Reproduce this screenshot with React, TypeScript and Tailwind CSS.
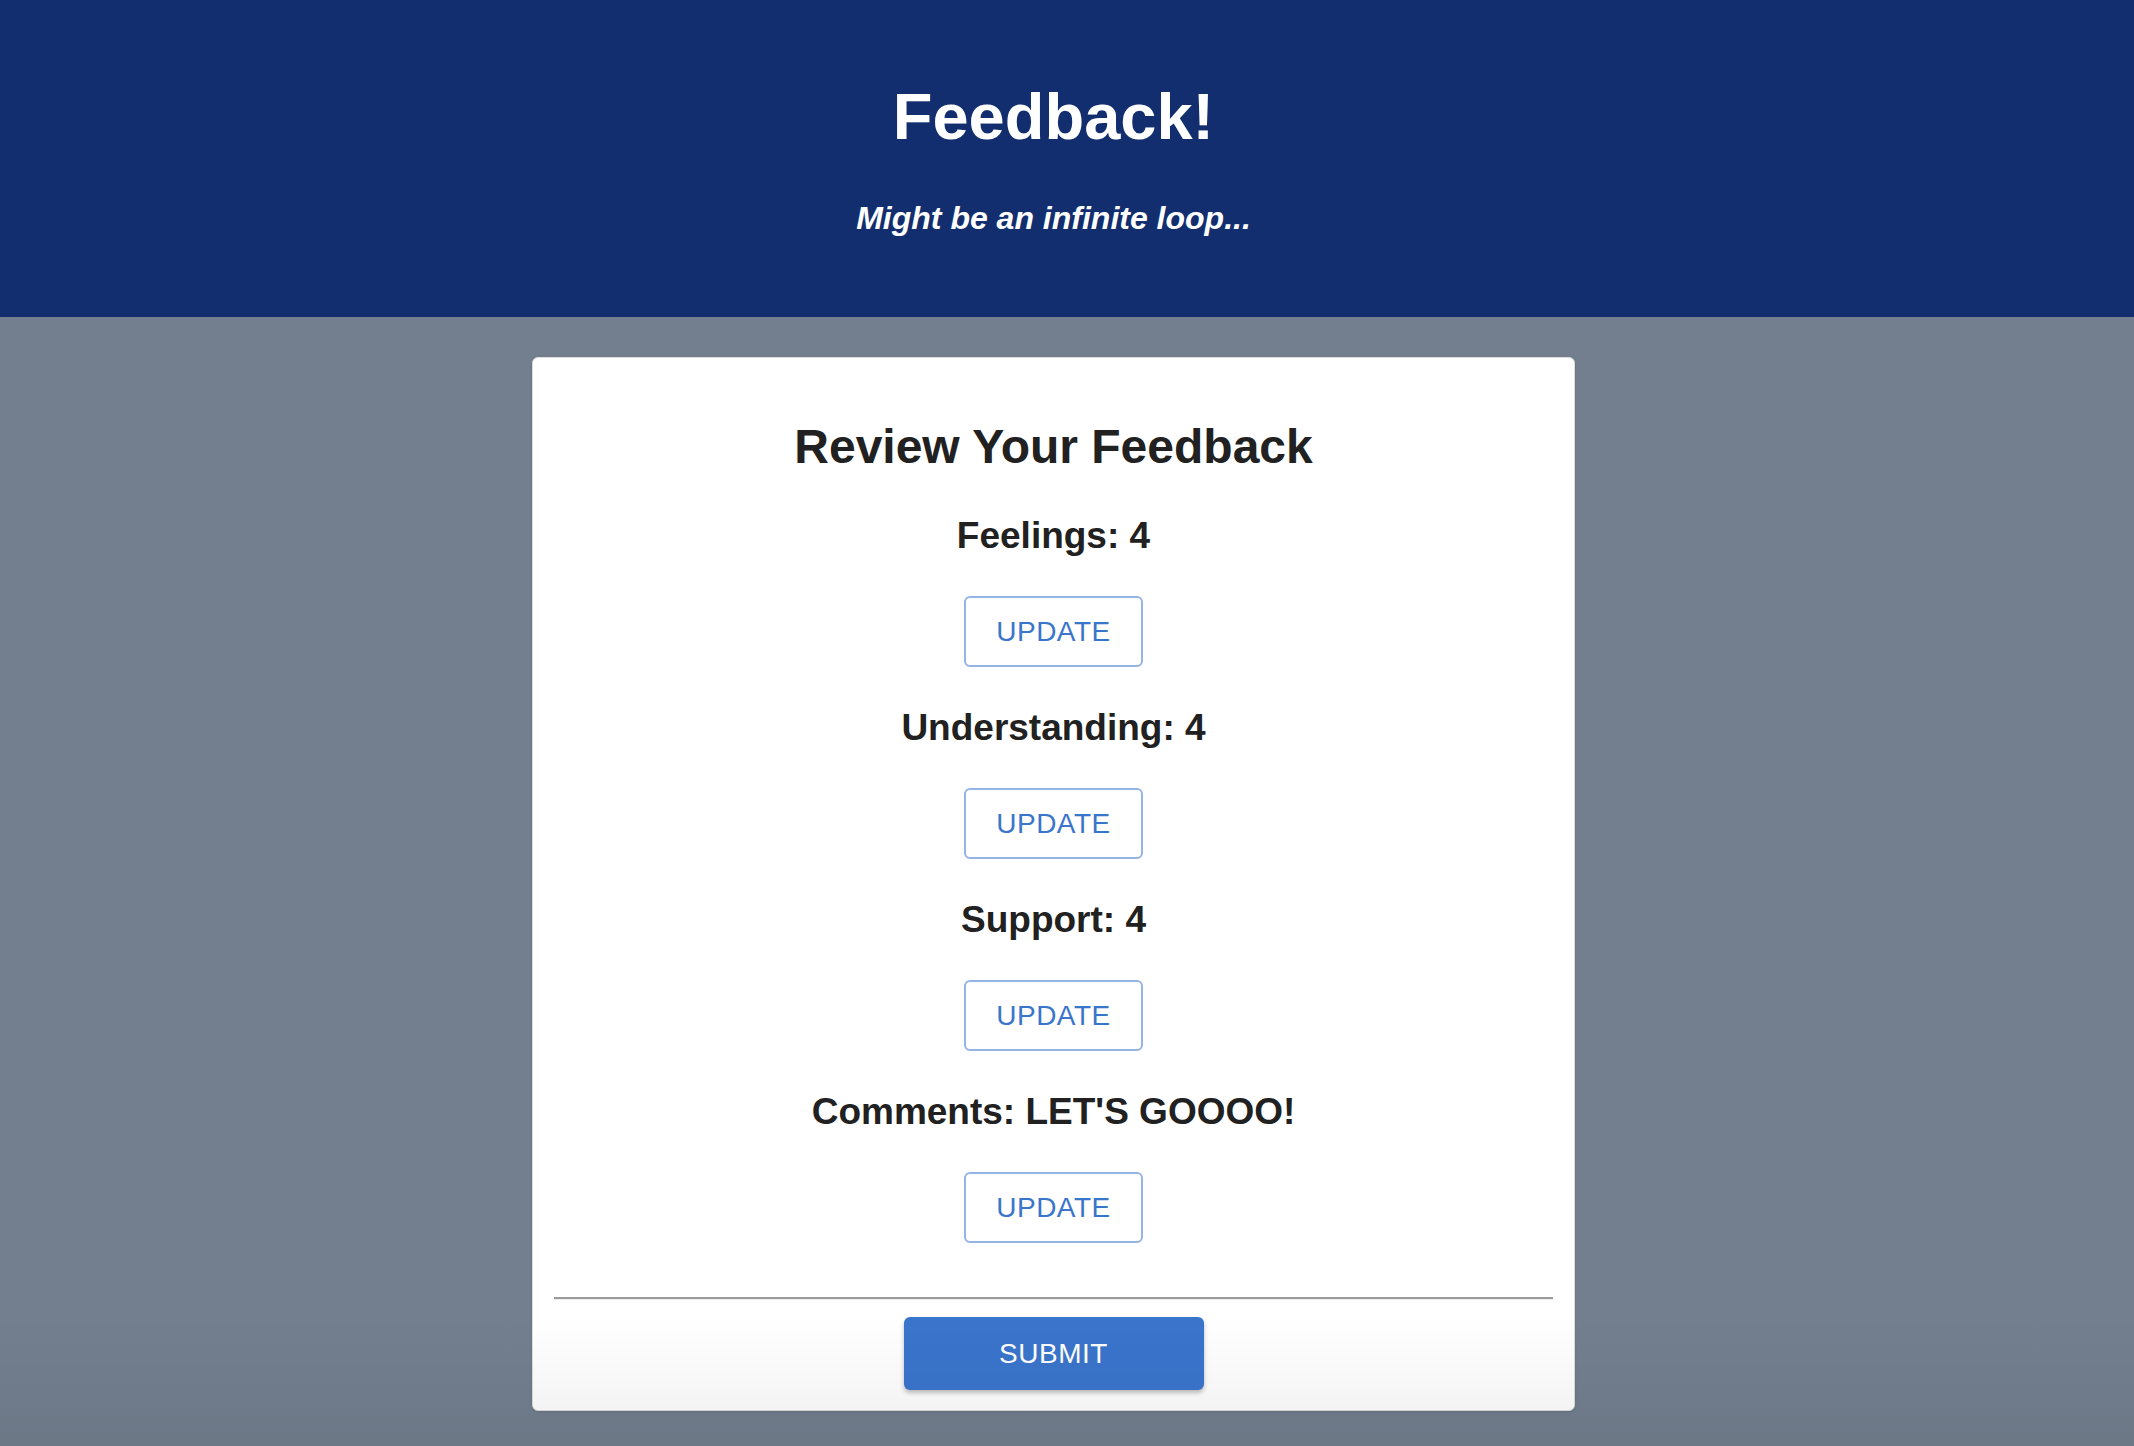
import React from "react";

const items = [
  { label: "Feelings", value: "4" },
  { label: "Understanding", value: "4" },
  { label: "Support", value: "4" },
  { label: "Comments", value: "LET'S GOOOO!" },
];

export default function App() {
  return (
    <div
      className="relative w-full h-[1446px] overflow-hidden bg-[#737f8f]"
      style={{ fontFamily: '"Liberation Sans", Arial, Helvetica, sans-serif' }}
    >
      <header className="h-[317px] bg-[#122e6f] pr-[27px] pt-[84px] flex flex-col items-center">
        <h1 className="text-[65px] leading-[66px] font-bold text-white">Feedback!</h1>
        <p className="mt-[50px] text-[32px] leading-[36px] font-bold italic text-white">
          Might be an infinite loop...
        </p>
      </header>

      <main className="pr-[27px] pt-[40px] flex justify-center">
        <div className="w-[1043px] rounded-[6px] border border-[#dddddd] bg-white shadow-sm px-[21px] pt-[61px] pb-[20px] flex flex-col items-center">
          <h2 className="text-[48px] leading-[56px] font-bold text-[#212121]">Review Your Feedback</h2>
          {items.map((it) => (
            <div key={it.label} className="flex flex-col items-center">
              <h3 className="mt-[39px] text-[37px] leading-[44px] font-bold text-[#212121]">
                {it.label}: {it.value}
              </h3>
              <button className="mt-[38px] w-[179px] h-[71px] rounded-[6px] border-2 border-[#95b4e6] bg-white flex items-center justify-center text-[28px] tracking-[0.5px] text-[#3a75cc]">
                UPDATE
              </button>
            </div>
          ))}
          <div className="mt-[54px] w-full border-t-2 border-b border-t-[#9b9b9b] border-b-[#ededed]" />
          <button className="mt-[17px] w-[300px] h-[73px] rounded-[6px] bg-[#3a75cc] text-white text-[28px] tracking-[0.5px] flex items-center justify-center shadow-[0_3px_4px_rgba(0,0,0,0.25)]">
            SUBMIT
          </button>
        </div>
      </main>

      <div className="pointer-events-none absolute left-0 right-0 bottom-0 h-[130px] bg-linear-to-b from-transparent to-black/6" />
    </div>
  );
}
